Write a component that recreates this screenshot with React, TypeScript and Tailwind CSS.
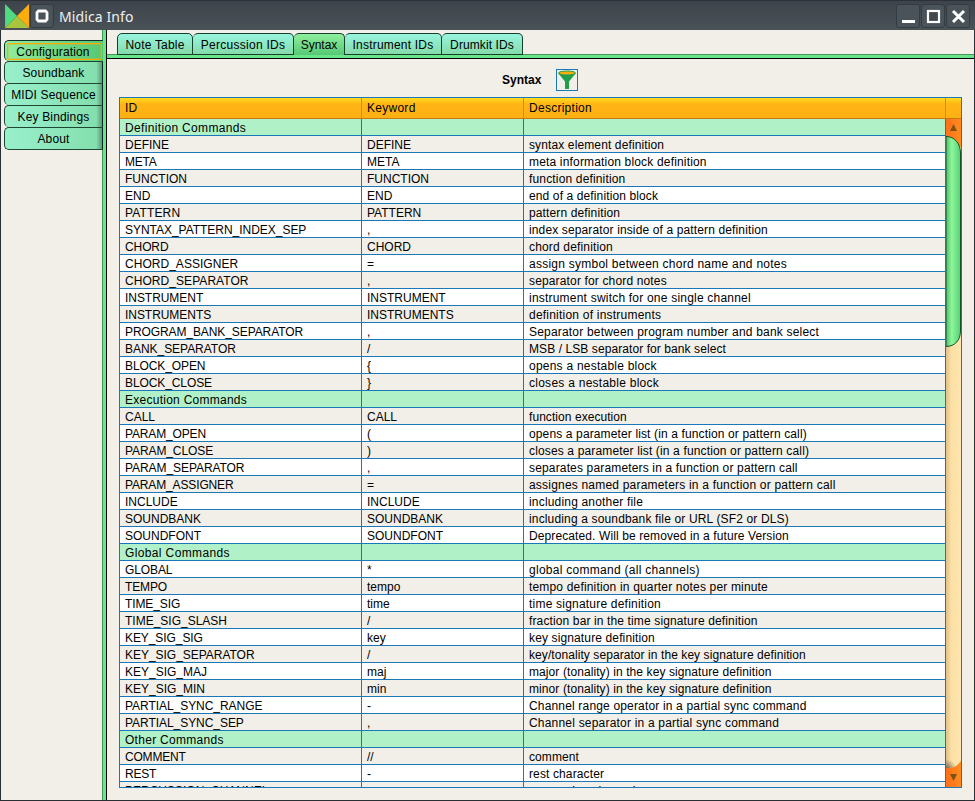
import React from "react";

// id, keyword, description, letter spacing of the id and of the description (px)
type Row = { id: string; keyword?: string; text?: string; idGap?: number; gap?: number };

const section = (id: string, idGap: number): Row => ({ id, idGap });
const entry = (id: string, keyword: string, text: string, gap = 0.16, idGap = 0): Row => ({ id, keyword, text, gap, idGap });

const rows: Row[] = [
  section("Definition Commands", 0.34),
  entry("DEFINE", "DEFINE", "syntax element definition", 0.12),
  entry("META", "META", "meta information block definition", 0.17, -0.2),
  entry("FUNCTION", "FUNCTION", "function definition", 0.16),
  entry("END", "END", "end of a definition block", 0.12),
  entry("PATTERN", "PATTERN", "pattern definition", 0.13, 0.14),
  entry("SYNTAX_PATTERN_INDEX_SEP", ",", "index separator inside of a pattern definition", 0.13, -0.03),
  entry("CHORD", "CHORD", "chord definition", 0.16, -0.1),
  entry("CHORD_ASSIGNER", "=", "assign symbol between chord name and notes", 0.25, 0.03),
  entry("CHORD_SEPARATOR", ",", "separator for chord notes", 0.15, 0.06),
  entry("INSTRUMENT", "INSTRUMENT", "instrument switch for one single channel", 0.21, -0.05),
  entry("INSTRUMENTS", "INSTRUMENTS", "definition of instruments", 0.22, -0.05),
  entry("PROGRAM_BANK_SEPARATOR", ",", "Separator between program number and bank select", 0.19, -0.09),
  entry("BANK_SEPARATOR", "/", "MSB / LSB separator for bank select", 0.08, -0.04),
  entry("BLOCK_OPEN", "{", "opens a nestable block", 0.23, -0.1),
  entry("BLOCK_CLOSE", "}", "closes a nestable block", 0.26, -0.1),
  section("Execution Commands", 0.26),
  entry("CALL", "CALL", "function execution", 0.06),
  entry("PARAM_OPEN", "(", "opens a parameter list (in a function or pattern call)", 0.13, -0.15),
  entry("PARAM_CLOSE", ")", "closes a parameter list (in a function or pattern call)", 0.145, -0.1),
  entry("PARAM_SEPARATOR", ",", "separates parameters in a function or pattern call", 0.157, -0.07),
  entry("PARAM_ASSIGNER", "=", "assignes named parameters in a function or pattern call", 0.2, -0.14),
  entry("INCLUDE", "INCLUDE", "including another file", 0.18),
  entry("SOUNDBANK", "SOUNDBANK", "including a soundbank file or URL (SF2 or DLS)", 0.15),
  entry("SOUNDFONT", "SOUNDFONT", "Deprecated. Will be removed in a future Version", 0.106),
  section("Global Commands", 0.37),
  entry("GLOBAL", "*", "global command (all channels)", 0.276, -0.1),
  entry("TEMPO", "tempo", "tempo definition in quarter notes per minute", 0.17, -0.15),
  entry("TIME_SIG", "time", "time signature definition", 0.21, -0.1),
  entry("TIME_SIG_SLASH", "/", "fraction bar in the time signature definition", 0.128, 0.0),
  entry("KEY_SIG_SIG", "key", "key signature definition", 0.13, -0.08),
  entry("KEY_SIG_SEPARATOR", "/", "key/tonality separator in the key signature definition", 0.074, -0.03),
  entry("KEY_SIG_MAJ", "maj", "major (tonality) in the key signature definition", 0.09),
  entry("KEY_SIG_MIN", "min", "minor (tonality) in the key signature definition", 0.09, 0.0),
  entry("PARTIAL_SYNC_RANGE", "-", "Channel range operator in a partial sync command", 0.167, -0.05),
  entry("PARTIAL_SYNC_SEP", ",", "Channel separator in a partial sync command", 0.2, -0.05),
  section("Other Commands", 0.29),
  entry("COMMENT", "//", "comment", 0.08, -0.2),
  entry("REST", "-", "rest character", 0.12, -0.2),
  entry("PERCUSSION_CHANNEL", "p", "percussion channel", 0.18),
];

const grid = "grid grid-cols-[242px_162px_422px]";

function TitleButton({ children }: { children: React.ReactNode }) {
  return (
    <div className="flex size-[24px] items-center justify-center rounded-[3px] border border-[#343b41] bg-[#4a535a]">
      {children}
    </div>
  );
}

function TitleBar() {
  return (
    <div className="flex h-[30px] items-center border-t border-[#2c3136] bg-linear-to-b from-[#3d444b] to-[#4a5157] pt-px pr-[5px] pl-[4px]">
      <svg width="25" height="24" viewBox="0 0 24 24" preserveAspectRatio="none">
        <path d="M1 0 12.500 12 1 24Z" fill="#4fdc80" />
        <path d="M24 0 12.500 12 24 24Z" fill="#ffad0a" />
        <path d="M12.500 12 24 24H1Z" fill="#a7c63e" />
      </svg>
      <div className="ml-px flex">
        <TitleButton>
          <svg width="22" height="22" viewBox="0 0 22 22">
            <path d="M7.500 6H14.500L16 7.500V14.500L14.500 16H7.500L6 14.500V7.500Z" fill="none" stroke="#fff" strokeWidth="2.800" />
          </svg>
        </TitleButton>
      </div>
      <div className="ml-[5px] flex-1 pt-px font-['Noto_Sans',sans-serif] text-[14px] leading-[20px] tracking-[0.1px] text-[#eef0f0]">Midica Info</div>
      <div className="flex gap-px">
        <TitleButton>
          <svg width="22" height="22"><path d="M5 15h13v3H5Z" fill="#fff" /></svg>
        </TitleButton>
        <TitleButton>
          <svg width="22" height="22"><rect x="6" y="6" width="11" height="11" fill="#414a51" stroke="#fff" strokeWidth="2.200" /></svg>
        </TitleButton>
        <TitleButton>
          <svg width="22" height="22"><path d="M6 6 17 17M17 6 6 17" stroke="#fff" strokeWidth="3" /></svg>
        </TitleButton>
      </div>
    </div>
  );
}

const sideTabs = ["Soundbank", "MIDI Sequence", "Key Bindings", "About"];

function SideBar() {
  return (
    <div className="relative z-10 w-[101px] pt-[10px] pl-[3px] text-center tracking-[0.15px]">
      <div className="-mr-px h-[21px] rounded-l-[5px] border-t border-l border-[#123324] bg-linear-to-r from-[#8fec9e] to-[#55c873] pt-[2px] pl-[2px]">
        <div className="h-[17px] w-[95px] rounded-[2px] border border-solid border-[#ffa800] pr-[3px] leading-[16px] ring-1 ring-[#ffa800]/30 ring-inset">
          Configuration
        </div>
      </div>
      {sideTabs.map((t) => (
        <div
          key={t}
          className="-mr-px h-[22px] rounded-l-[5px] border-t border-r border-l border-[#1d4733] border-r-[#0f2a1c] bg-linear-to-r from-[#98f0cc] via-[#84dfae] via-94% to-[#5a9c78] leading-[22px] last:h-[23px] last:border-b"
        >
          {t}
        </div>
      ))}
    </div>
  );
}

const topTabs = [
  { label: "Note Table", box: "w-[76px] tracking-[0.2px]" },
  { label: "Percussion IDs", box: "w-[101px] tracking-[0.28px]" },
  { label: "Syntax", box: "w-[51px]" },
  { label: "Instrument IDs", box: "w-[97px] tracking-[0.2px]" },
  { label: "Drumkit IDs", box: "w-[81px] tracking-[0.1px]" },
];

function TopTabs() {
  return (
    <div className="flex h-[25px] pt-[3px] pl-[10px] text-center leading-[22px]">
      {topTabs.map((t) => (
        <div
          key={t.label}
          className={`${t.box} h-[22px] rounded-t-[5px] border-t border-r border-[#14402d] first:border-l ${
            t.label === "Syntax" ? "bg-linear-to-b from-[#8fef9d] to-[#55c873]" : "border-b bg-linear-to-b from-[#98f5df] to-[#84dba9]"
          }`}
        >
          {t.label}
        </div>
      ))}
    </div>
  );
}

function ScrollBar() {
  return (
    <svg width="15" height="668" viewBox="0 0 15 668">
      <defs>
        <linearGradient id="track"><stop offset="0" stopColor="#dfc08a" /><stop offset=".35" stopColor="#fce0a4" /><stop offset="1" stopColor="#ffe6b0" /></linearGradient>
        <linearGradient id="thumb"><stop offset="0" stopColor="#4fbd68" /><stop offset=".4" stopColor="#8df79b" /><stop offset="1" stopColor="#58cf75" /></linearGradient>
        <linearGradient id="button"><stop offset="0" stopColor="#ff6f18" /><stop offset="1" stopColor="#ff8c20" /></linearGradient>
        <radialGradient id="shade" gradientUnits="userSpaceOnUse" cx="0" cy="651" r="11"><stop offset="0" stopColor="#4a4030" stopOpacity=".8" /><stop offset="1" stopColor="#4a4030" stopOpacity="0" /></radialGradient>
      </defs>
      <path d="M0 0h15v668H0Z" fill="url(#track)" />
      <path d="M0 638h15v16H0Z" fill="url(#shade)" />
      <path d="M0 0h15v28H0Z" fill="url(#button)" />
      <path d="M0 17.500C9 17.500 14.500 25 14.500 34V212C14.500 221 9 227.500 0 227.500Z" fill="url(#thumb)" stroke="#14532a" />
      <path d="M0 649C8 649.500 11 647 15 642V668H0Z" fill="url(#button)" />
      <path d="M4 12h7L7.500 5Z" fill="#7c5310" />
      <path d="M4 655h7L7.500 662Z" fill="#7c5310" />
    </svg>
  );
}

function SyntaxTable() {
  return (
    <div className="ml-[12px] flex h-[691px] w-[843px] flex-col overflow-hidden border border-[#1a78b8]">
      <div className={`${grid} h-[21px] shrink-0 border-b border-[#c47a10] bg-linear-to-b from-[#ffdc20] via-[#ffb515] via-30% to-[#ffb013] leading-[20px] tracking-[0.27px]`}>
        <div className="border-r border-[#d98a12] pl-[5px]">ID</div>
        <div className="border-r border-[#d98a12] pl-[5px]">Keyword</div>
        <div className="border-r border-[#d98a12] pl-[5px]">Description</div>
      </div>
      <div className="flex min-h-0 flex-1">
        <div className="w-[826px] overflow-hidden">
          {rows.map((r, i) => (
            <div key={r.id} className={`${grid} h-[17px] border-b border-[#1a78b8] leading-[18px] ${!r.keyword ? "bg-[#b0f1c8]" : i % 2 ? "bg-[#f2efe9]" : "bg-white"}`}>
              <div className="h-[16px] border-r border-[#1a78b8] pl-[5px]" style={{ letterSpacing: r.idGap }}>{r.id}</div>
              <div className="h-[16px] border-r border-[#1a78b8] pl-[5px]">{r.keyword}</div>
              <div className="h-[16px] border-r border-[#1a78b8] pl-[5px]" style={{ letterSpacing: r.gap }}>{r.text}</div>
            </div>
          ))}
        </div>
        <ScrollBar />
      </div>
    </div>
  );
}

export default function App() {
  return (
    <div className="flex h-[801px] w-[975px] flex-col overflow-hidden bg-[#f2efe9] font-['Liberation_Sans',Arial,sans-serif] text-[12px] whitespace-nowrap text-black">
      <TitleBar />
      <div className="flex min-h-0 flex-1 border-r border-b border-l border-[#2a2f33]">
        <SideBar />
        <div className="w-[5px] border-r border-l border-r-black border-l-[#3f9658] bg-[#69e488]" />
        <div className="flex-1">
          <TopTabs />
          <div className="-mt-px h-[5px] border-t border-b border-t-[#3f9658] border-b-black bg-[#69e488]" />
          <div className="flex h-[38px] items-center pt-[4px] pl-[395px]">
            <span className="w-[54px] font-bold">Syntax</span>
            <div className="flex size-[22px] items-center justify-center border border-[#1a78b8]">
              <svg width="20" height="20" viewBox="0 0 20 20">
                <path d="M1 3 8 11.500V19H12V11.500L19 3Z" fill="#1f9e4c" />
                <ellipse cx="10" cy="3" rx="8.500" ry="2" fill="#ffad0a" stroke="#1f9e4c" />
              </svg>
            </div>
          </div>
          <SyntaxTable />
        </div>
      </div>
    </div>
  );
}
